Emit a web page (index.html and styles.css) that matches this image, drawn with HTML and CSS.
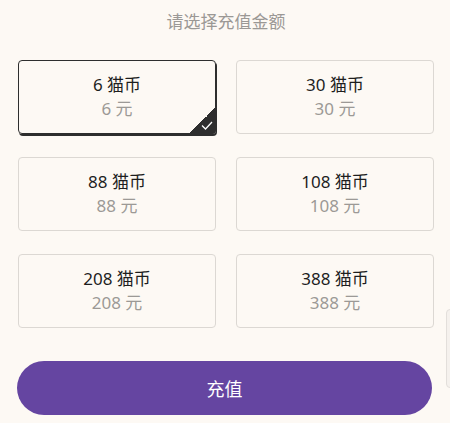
FILE: index.html
```html
<!DOCTYPE html>
<html lang="zh-CN">
<head>
    <meta charset="UTF-8">
    <meta name="viewport" content="width=device-width, initial-scale=1.0">
    <title>充值</title>
    <link rel="stylesheet" href="styles.css">
</head>
<body>
    <div class="recharge">
        <p class="title">请选择充值金额</p>

        <div class="options">
            <div class="option selected">
                <span class="coins">6 猫币</span>
                <span class="price">6 元</span>
                <span class="corner">
                    <svg width="12" height="9" viewBox="0 0 12 9"><path d="M1 4.5 L4.5 8 L11 1" fill="none" stroke="#fff" stroke-width="1.3"/></svg>
                </span>
            </div>
            <div class="option">
                <span class="coins">30 猫币</span>
                <span class="price">30 元</span>
            </div>
            <div class="option">
                <span class="coins">88 猫币</span>
                <span class="price">88 元</span>
            </div>
            <div class="option">
                <span class="coins">108 猫币</span>
                <span class="price">108 元</span>
            </div>
            <div class="option">
                <span class="coins">208 猫币</span>
                <span class="price">208 元</span>
            </div>
            <div class="option">
                <span class="coins">388 猫币</span>
                <span class="price">388 元</span>
            </div>
        </div>

        <button class="pay-btn">充值</button>
    </div>

    <div class="side-handle"></div>
</body>
</html>
```

FILE: styles.css
```css
body {
    font-family: 'Noto Sans', 'Noto Sans CJK SC', sans-serif;
    background-color: #fdf9f4;
    margin: 0;
    padding: 0;
    overflow: hidden;
}

.recharge {
    padding: 0 16px 0 18px;
}

.title {
    margin: 0;
    padding-top: 10px;
    height: 60px;
    box-sizing: border-box;
    text-align: center;
    font-size: 17px;
    line-height: 24px;
    color: #9b9895;
}

.options {
    display: grid;
    grid-template-columns: 198px 198px;
    column-gap: 20px;
    row-gap: 23px;
}

.option {
    position: relative;
    height: 74px;
    box-sizing: border-box;
    border: 1.5px solid #dcd8d3;
    border-radius: 4px;
    display: flex;
    flex-direction: column;
    justify-content: center;
    align-items: center;
    overflow: hidden;
}

.option.selected {
    border: 1.5px solid #2e2e2e;
    box-shadow: 1px 2px 0 #2e2e2e;
    overflow: visible;
}

.coins {
    font-size: 17px;
    line-height: 24px;
    color: #1e1e1e;
}

.price {
    font-size: 17px;
    line-height: 24px;
    color: #9c9996;
}

.corner {
    position: absolute;
    right: -1px;
    bottom: -1px;
    width: 27px;
    height: 27px;
    background: linear-gradient(to bottom right, transparent 50%, #2e2e2e 50%);
    border-bottom-right-radius: 4px;
}

.corner svg {
    position: absolute;
    right: 3px;
    bottom: 4px;
}

.pay-btn {
    display: block;
    width: 415px;
    height: 54px;
    margin: 33px 0 0 -1px;
    border: none;
    border-radius: 27px;
    background-color: #6545a1;
    color: #ffffff;
    font-family: inherit;
    font-size: 18px;
}

.side-handle {
    position: absolute;
    right: -4px;
    top: 309px;
    width: 8px;
    height: 79px;
    box-sizing: border-box;
    border: 1px solid #e3dfdb;
    border-radius: 4px;
    background-color: #f5f1ed;
}
```
